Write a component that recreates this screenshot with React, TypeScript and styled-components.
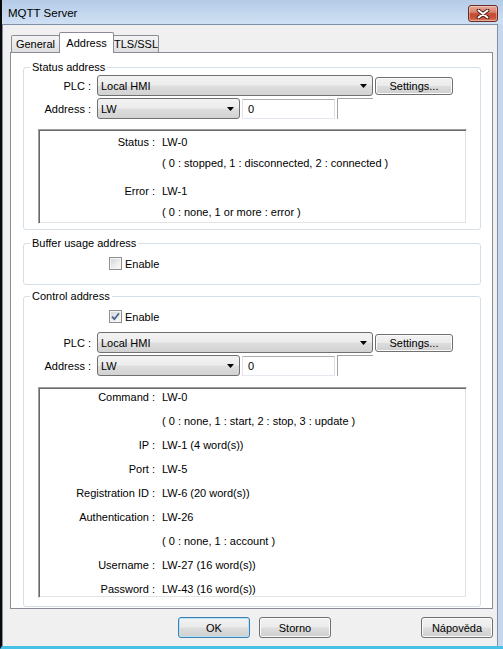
import React from "react";
import styled, { createGlobalStyle, css } from "styled-components";

const GlobalStyle = createGlobalStyle`
  html, body {
    margin: 0;
    padding: 0;
    background: #ffffff;
  }
  body {
    font-family: "Liberation Sans", Arial, sans-serif;
    font-size: 11px;
    color: #000;
  }
  * {
    box-sizing: border-box;
  }
`;

const Window = styled.div`
  width: 503px;
  height: 649px;
  display: flex;
  flex-direction: column;
  background: #c5d8ee;
  border-left: 2px solid #0a0a0a;
  border-bottom: 3px solid #46c0e7;
  overflow: hidden;
`;

const TitleBar = styled.div`
  height: 24px;
  flex: none;
  display: flex;
  align-items: flex-start;
  justify-content: space-between;
  padding: 0 5px 0 6px;
  background: linear-gradient(to bottom, #b4cbe6 0%, #c3d7ee 55%, #cfe0f3 100%);
`;

const Title = styled.span`
  font-size: 11.5px;
  line-height: 14px;
  margin-top: 6px;
`;

const CloseButton = styled.div`
  width: 30px;
  height: 17px;
  margin-top: 5px;
  display: flex;
  align-items: center;
  justify-content: center;
  border: 1px solid #6b2b22;
  border-radius: 3px;
  background: linear-gradient(to bottom, #e7ab9c 0%, #d8806c 42%, #c64a33 52%, #c75238 80%, #dc8866 100%);
  box-shadow: inset 0 0 0 1px rgba(255, 255, 255, 0.35);
`;

const Client = styled.div`
  flex: 1;
  display: flex;
  flex-direction: column;
  margin-right: 5px;
  background: #f0f0f0;
  border: 1px solid #7d90a8;
  border-bottom: none;
  padding: 7px 4px 0 7px;
`;

const TabStrip = styled.div`
  height: 20px;
  flex: none;
  display: flex;
  align-items: flex-end;
  padding-left: 1px;
  position: relative;
  z-index: 2;
`;

const Tab = styled.div<{ $w: number; $active?: boolean }>`
  width: ${(p) => p.$w}px;
  height: 17px;
  display: flex;
  align-items: center;
  justify-content: center;
  border: 1px solid #898c95;
  border-bottom: none;
  border-radius: 2px 2px 0 0;
  background: linear-gradient(to bottom, #f4f4f4 0%, #ebebeb 50%, #dedede 100%);
  & + & {
    margin-left: -1px;
  }
  ${(p) =>
    p.$active &&
    css`
      height: 21px;
      margin-bottom: -1px;
      background: #ffffff;
      position: relative;
      z-index: 3;
    `}
`;

const TabPanel = styled.div`
  height: 557px;
  flex: none;
  display: flex;
  flex-direction: column;
  border: 1px solid #898c95;
  background: #ffffff;
  padding: 8px 11px 0 12px;
`;

const GroupBox = styled.fieldset<{ $mt?: number; $pb: number }>`
  margin: ${(p) => p.$mt ?? 0}px 0 0 0;
  padding: 0 0 ${(p) => p.$pb}px 0;
  border: 1px solid #d5dfe5;
  border-radius: 3px;
  min-width: 0;
`;

const GroupLegend = styled.legend`
  margin-left: 6px;
  padding: 0 2px;
  height: 13px;
  line-height: 13px;
`;

const FieldRow = styled.div<{ $mt?: number }>`
  display: flex;
  align-items: center;
  height: 21px;
  margin-top: ${(p) => p.$mt ?? 0}px;
`;

const FieldLabel = styled.span`
  width: 67px;
  flex: none;
  text-align: right;
  margin-right: 6px;
`;

const Combo = styled.div<{ $w: number }>`
  width: ${(p) => p.$w}px;
  height: 21px;
  flex: none;
  display: flex;
  align-items: center;
  justify-content: space-between;
  padding: 0 5px 0 3px;
  border: 1px solid #707070;
  border-radius: 3px;
  background: linear-gradient(to bottom, #f3f3f3 0%, #ececec 48%, #dedede 52%, #d2d2d2 100%);
`;

const TextBox = styled.div`
  width: 93px;
  height: 20px;
  flex: none;
  margin-left: 2px;
  display: flex;
  align-items: center;
  padding-left: 5px;
  background: #ffffff;
  border: 1px solid;
  border-color: #abadb3 #dbdfe6 #e3e9ef #e2e3ea;
`;

const ClippedBox = styled.div`
  width: 36px;
  height: 21px;
  flex: none;
  margin-left: 2px;
  border-top: 1px solid #a3a3a3;
  border-left: 1px solid #a3a3a3;
`;

const PushButton = styled.button<{ $w: number; $h: number; $default?: boolean }>`
  width: ${(p) => p.$w}px;
  height: ${(p) => p.$h}px;
  flex: none;
  padding: 0;
  font: inherit;
  color: #000;
  border: 1px solid #707070;
  border-radius: 3px;
  background: linear-gradient(to bottom, #f2f2f2 0%, #ebebeb 48%, #dddddd 52%, #cfcfcf 100%);
  box-shadow: inset 0 0 0 1px #fbfbfb;
  ${(p) =>
    p.$default &&
    css`
      border-color: #3c7fb1;
      box-shadow: inset 0 0 0 1px #b6e3f8;
    `}
`;

const SettingsButton = styled(PushButton)`
  margin-left: 2px;
`;

const CheckRow = styled.label<{ $mt?: number }>`
  display: flex;
  align-items: center;
  height: 13px;
  margin: ${(p) => p.$mt ?? 0}px 0 0 85px;
  gap: 3px;
`;

const CheckBox = styled.span`
  width: 13px;
  height: 13px;
  flex: none;
  display: flex;
  align-items: center;
  justify-content: center;
  border: 1px solid #8e8f8f;
  background: linear-gradient(135deg, #cfd2d6 0%, #eeeeee 60%, #fafafa 100%);
  box-shadow: inset 0 0 0 1px #f5f5f5;
`;

const Spacer = styled.div<{ $h: number }>`
  height: ${(p) => p.$h}px;
  flex: none;
`;

const InfoPanel = styled.div<{ $mt: number; $h: number; $pt: number }>`
  margin: ${(p) => p.$mt}px 0 0 14px;
  width: 429px;
  height: ${(p) => p.$h}px;
  padding-top: ${(p) => p.$pt}px;
  background: #ffffff;
  border: 1px solid;
  border-color: #a0a0a0 #ffffff #ffffff #a0a0a0;
  box-shadow: inset 1px 1px 0 #696969, inset -1px -1px 0 #e3e3e3;
  overflow: hidden;
`;

const InfoRow = styled.div<{ $mt?: number }>`
  display: grid;
  grid-template-columns: 116px 1fr;
  column-gap: 7px;
  line-height: 16px;
  height: 16px;
  margin-top: ${(p) => p.$mt ?? 0}px;
  white-space: nowrap;
`;

const InfoLabel = styled.span`
  text-align: right;
`;

const ButtonBar = styled.div`
  display: flex;
  align-items: center;
  gap: 9px;
  margin-top: 8px;
  padding: 0 0 0 168px;
`;

const HelpSlot = styled.div`
  margin-left: auto;
  display: flex;
`;

function DropArrow() {
  return (
    <svg width="7" height="4" viewBox="0 0 7 4">
      <polygon points="0,0 7,0 3.5,4" fill="#000" />
    </svg>
  );
}

function CheckMark() {
  return (
    <svg width="9" height="9" viewBox="0 0 9 9">
      <path d="M1 4.6 L3.4 7.2 L8 1.2" fill="none" stroke="#4d6290" strokeWidth="1.8" />
    </svg>
  );
}

function CloseGlyph() {
  return (
    <svg width="14" height="10" viewBox="0 0 14 10">
      <path d="M2.5 1.5 L11.5 8.5 M11.5 1.5 L2.5 8.5" stroke="#4a1c16" strokeWidth="3.8" strokeLinecap="round" />
      <path d="M2.5 1.5 L11.5 8.5 M11.5 1.5 L2.5 8.5" stroke="#ffffff" strokeWidth="2" strokeLinecap="round" />
    </svg>
  );
}

function PlcRows() {
  return (
    <>
      <FieldRow>
        <FieldLabel>PLC :</FieldLabel>
        <Combo $w={276}>
          <span>Local HMI</span>
          <DropArrow />
        </Combo>
        <SettingsButton $w={78} $h={18}>
          Settings...
        </SettingsButton>
      </FieldRow>
      <FieldRow $mt={2}>
        <FieldLabel>Address :</FieldLabel>
        <Combo $w={143}>
          <span>LW</span>
          <DropArrow />
        </Combo>
        <TextBox>0</TextBox>
        <ClippedBox />
      </FieldRow>
    </>
  );
}

type Line = { label?: string; value: string; mt?: number };

const statusLines: Line[] = [
  { label: "Status :", value: "LW-0" },
  { value: "( 0 : stopped, 1 : disconnected, 2 : connected )", mt: 5 },
  { label: "Error :", value: "LW-1", mt: 12 },
  { value: "( 0 : none, 1 or more : error )", mt: 5 },
];

const controlLines: Line[] = [
  { label: "Command :", value: "LW-0" },
  { value: "( 0 : none, 1 : start, 2 : stop, 3 : update )", mt: 8 },
  { label: "IP :", value: "LW-1 (4 word(s))", mt: 8 },
  { label: "Port :", value: "LW-5", mt: 8 },
  { label: "Registration ID :", value: "LW-6 (20 word(s))", mt: 8 },
  { label: "Authentication :", value: "LW-26", mt: 8 },
  { value: "( 0 : none, 1 : account )", mt: 8 },
  { label: "Username :", value: "LW-27 (16 word(s))", mt: 8 },
  { label: "Password :", value: "LW-43 (16 word(s))", mt: 8 },
];

function InfoLines({ lines }: { lines: Line[] }) {
  return (
    <>
      {lines.map((l, i) => (
        <InfoRow key={i} $mt={l.mt}>
          <InfoLabel>{l.label ?? ""}</InfoLabel>
          <span>{l.value}</span>
        </InfoRow>
      ))}
    </>
  );
}

export default function App() {
  return (
    <>
      <GlobalStyle />
      <Window>
        <TitleBar>
          <Title>MQTT Server</Title>
          <CloseButton>
            <CloseGlyph />
          </CloseButton>
        </TitleBar>
        <Client>
          <TabStrip>
            <Tab $w={49}>General</Tab>
            <Tab $w={55} $active>
              Address
            </Tab>
            <Tab $w={46}>TLS/SSL</Tab>
          </TabStrip>
          <TabPanel>
            <GroupBox $pb={5}>
              <GroupLegend>Status address</GroupLegend>
              <Spacer $h={1} />
              <PlcRows />
              <InfoPanel $mt={10} $h={95} $pt={4}>
                <InfoLines lines={statusLines} />
              </InfoPanel>
            </GroupBox>

            <GroupBox $mt={7} $pb={14}>
              <GroupLegend>Buffer usage address</GroupLegend>
              <CheckRow $mt={7}>
                <CheckBox />
                <span>Enable</span>
              </CheckRow>
            </GroupBox>

            <GroupBox $mt={5} $pb={8}>
              <GroupLegend>Control address</GroupLegend>
              <CheckRow $mt={7}>
                <CheckBox>
                  <CheckMark />
                </CheckBox>
                <span>Enable</span>
              </CheckRow>
              <Spacer $h={9} />
              <PlcRows />
              <InfoPanel $mt={11} $h={211} $pt={1}>
                <InfoLines lines={controlLines} />
              </InfoPanel>
            </GroupBox>
          </TabPanel>
          <ButtonBar>
            <PushButton $w={72} $h={21} $default>
              OK
            </PushButton>
            <PushButton $w={72} $h={21}>
              Storno
            </PushButton>
            <HelpSlot>
              <PushButton $w={72} $h={21}>
                Nápověda
              </PushButton>
            </HelpSlot>
          </ButtonBar>
        </Client>
      </Window>
    </>
  );
}
